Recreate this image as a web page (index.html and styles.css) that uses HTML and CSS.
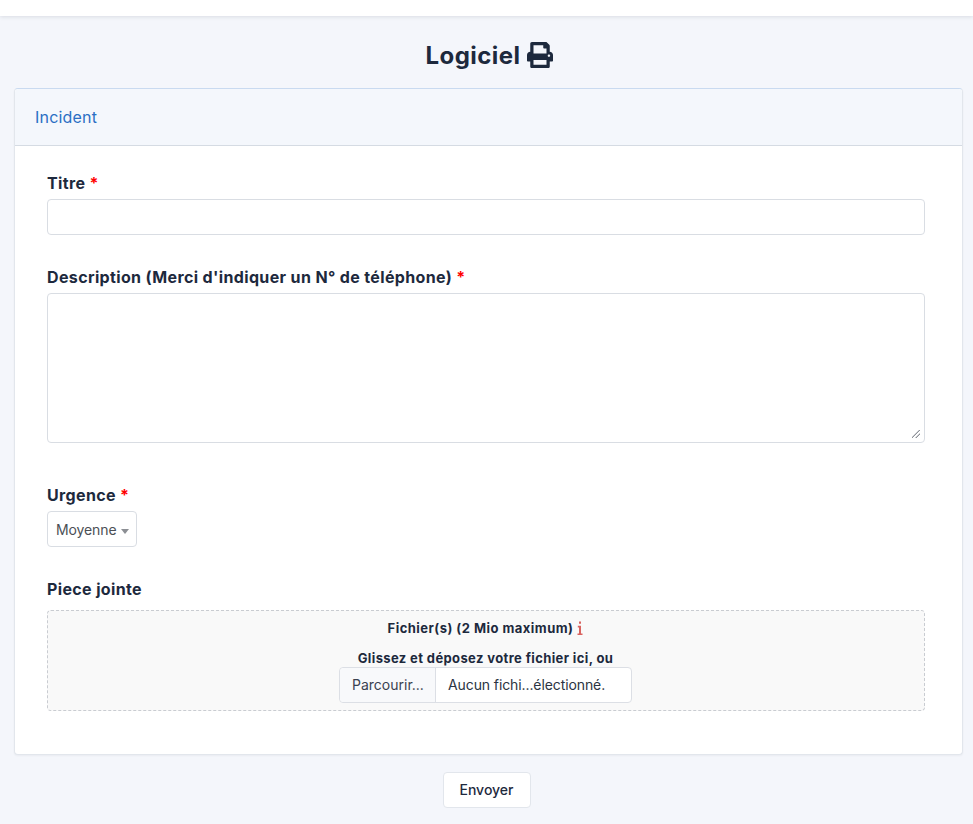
FILE: index.html
```html
<!DOCTYPE html>
<html lang="fr">
<head>
    <meta charset="UTF-8">
    <title>Logiciel</title>
    <link rel="stylesheet" href="styles.css">
</head>
<body>
    <div class="top-bar"></div>

    <main class="page">
        <h1 class="page-title">
            Logiciel
            <svg class="title-icon" viewBox="0 0 512 512" aria-hidden="true">
                <path d="M448 192V77.25c0-8.49-3.37-16.62-9.37-22.63L393.37 9.37c-6-6-14.14-9.37-22.63-9.37H96C78.33 0 64 14.33 64 32v160c-35.35 0-64 28.65-64 64v112c0 8.84 7.16 16 16 16h48v96c0 17.67 14.33 32 32 32h320c17.67 0 32-14.33 32-32v-96h48c8.84 0 16-7.16 16-16V256c0-35.35-28.65-64-64-64zm-64 256H128v-96h256v96zm0-224H128V64h192v48c0 8.84 7.16 16 16 16h48v96zm48 72c-13.25 0-24-10.75-24-24 0-13.26 10.75-24 24-24s24 10.74 24 24c0 13.25-10.75 24-24 24z"/>
            </svg>
        </h1>

        <form class="card">
            <div class="card-header">Incident</div>

            <div class="card-body">
                <div class="field field-title">
                    <label class="field-label" for="titre">Titre <span class="required">*</span></label>
                    <input class="text-input" id="titre" type="text">
                </div>

                <div class="field field-description">
                    <label class="field-label" for="description">Description (Merci d'indiquer un N° de téléphone) <span class="required">*</span></label>
                    <textarea class="text-area" id="description"></textarea>
                </div>

                <div class="field field-urgency">
                    <label class="field-label" for="urgence">Urgence <span class="required">*</span></label>
                    <div class="select-box">
                        <select class="select-input" id="urgence">
                            <option>Moyenne</option>
                        </select>
                    </div>
                </div>

                <div class="field">
                    <div class="field-label attach-label">Piece jointe</div>
                    <div class="dropzone">
                        <div class="drop-limit">
                            Fichier(s) (2 Mio maximum)
                            <svg class="info-icon" viewBox="0 0 6 14" aria-hidden="true">
                                <path d="M2 0.5h2v2.2H2zM0.8 4.8H4v7.6h1.5V14H0.5v-1.6H2V6.4H0.8z"/>
                            </svg>
                        </div>
                        <div class="drop-text">Glissez et déposez votre fichier ici, ou</div>
                        <div class="file-picker">
                            <span class="file-button">Parcourir...</span>
                            <span class="file-name">Aucun fichi...électionné.</span>
                        </div>
                    </div>
                </div>
            </div>
        </form>

        <div class="actions">
            <button class="submit-button" type="button">Envoyer</button>
        </div>
    </main>
</body>
</html>
```

FILE: styles.css
```css
* {
    box-sizing: border-box;
}

body {
    margin: 0;
    font-family: "Inter", "Liberation Sans", sans-serif;
    background-color: #f4f6fb;
    color: #1d293d;
}

.top-bar {
    height: 16px;
    background-color: #fff;
    box-shadow: 0 1px 4px rgba(30, 41, 60, 0.12);
}

.page {
    padding: 0 10px 16px 14px;
}

.page-title {
    display: flex;
    align-items: center;
    justify-content: center;
    gap: 7px;
    height: 72px;
    margin: 0;
    padding: 6px 0 0 2px;
    font-size: 24px;
    font-weight: 700;
    letter-spacing: 0.45px;
}

.title-icon {
    width: 26px;
    height: 26px;
    fill: #1d293d;
}

.card {
    display: block;
    background-color: #fff;
    border: 1px solid #e2e6ec;
    border-top-color: #c9daf0;
    border-radius: 4px;
    box-shadow: 0 1px 2px rgba(30, 41, 60, 0.05);
}

.card-header {
    height: 57px;
    padding: 0 20px;
    line-height: 56px;
    font-size: 16px;
    letter-spacing: 0.2px;
    color: #2a6fc4;
    background-color: #f4f7fc;
    border-bottom: 1px solid #d5dbe3;
    border-radius: 4px 4px 0 0;
}

.card-body {
    padding: 25px 37px 43px 32px;
}

.field-label {
    display: block;
    height: 28px;
    font-size: 16px;
    font-weight: 700;
    line-height: 24px;
    letter-spacing: 0.36px;
}

.required {
    color: #f00;
}

.field-title {
    margin-bottom: 30px;
}

.field-description {
    margin-bottom: 40px;
}

.field-urgency {
    margin-bottom: 30px;
}

.text-input,
.text-area {
    display: block;
    width: 100%;
    border: 1px solid #d9dde3;
    border-radius: 4px;
    background-color: #fff;
    font-family: inherit;
    font-size: 14px;
}

.text-input {
    height: 36px;
}

.text-area {
    height: 150px;
    resize: vertical;
}

/* poignee plus discrete, comme sur la capture */
.text-area::-webkit-resizer {
    background-image: linear-gradient(135deg,
        transparent 42%, #8f939a 46%, #8f939a 50%, transparent 54%,
        transparent 67%, #8f939a 71%, #8f939a 75%, transparent 79%);
    background-size: 8px 8px;
    background-position: 3px 3px;
    background-repeat: no-repeat;
}

.select-box {
    position: relative;
    width: 90px;
    height: 36px;
}

.select-box::after {
    content: "";
    position: absolute;
    right: 8px;
    top: 18px;
    border-left: 4px solid transparent;
    border-right: 4px solid transparent;
    border-top: 5px solid #8c8f94;
}

.select-input {
    width: 100%;
    height: 100%;
    padding: 0 0 0 8px;
    appearance: none;
    border: 1px solid #d9dde3;
    border-radius: 4px;
    background-color: #fff;
    font-family: inherit;
    font-size: 14px;
    letter-spacing: -0.1px;
    color: #4b4f55;
}

.attach-label {
    height: 33px;
}

.dropzone {
    height: 101px;
    padding: 7px 1px 0 0;
    text-align: center;
    background-color: #f9f9f9;
    border: 1px dashed #c9ccd1;
    border-radius: 4px;
    font-size: 13px;
    font-weight: 700;
}

.drop-limit {
    display: flex;
    align-items: center;
    justify-content: center;
    gap: 4px;
    height: 20px;
    letter-spacing: 0.47px;
}

.info-icon {
    width: 6px;
    height: 14px;
    fill: #d9635f;
}

.drop-text {
    height: 20px;
    margin-top: 10px;
    line-height: 20px;
    letter-spacing: 0.38px;
}

.file-picker {
    display: flex;
    width: 293px;
    height: 36px;
    margin: -1px auto 0;
    border: 1px solid #dcdfe5;
    border-radius: 4px;
    background-color: #fff;
    font-size: 14px;
    font-weight: 400;
    line-height: 34px;
    text-align: left;
}

.file-button {
    width: 96px;
    padding-left: 12px;
    background-color: #f8f9fb;
    border-right: 1px solid #dcdfe5;
    border-radius: 4px 0 0 4px;
    color: #3a4250;
}

.file-name {
    padding-left: 12px;
    letter-spacing: -0.1px;
    color: #2b3442;
}

.actions {
    display: flex;
    justify-content: center;
    margin-top: 17px;
    padding-right: 4px;
}

.submit-button {
    width: 88px;
    height: 36px;
    padding: 0 0 1px;
    background-color: #fff;
    border: 1px solid #e2e6ec;
    border-radius: 4px;
    font-family: inherit;
    font-size: 14px;
    font-weight: 500;
    color: #1d293d;
}
```
